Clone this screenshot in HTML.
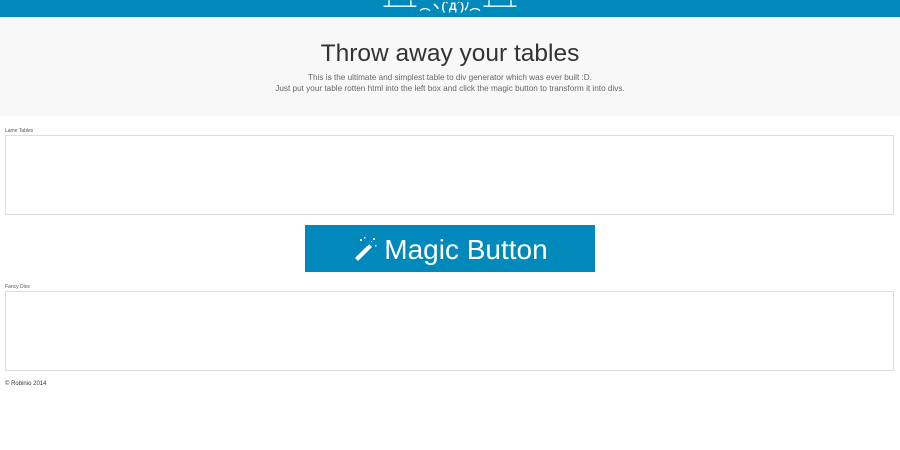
<!DOCTYPE html>
<html><head><meta charset="utf-8"><style>
body{margin:0;width:900px;height:450px;background:#fff;font-family:"Liberation Sans","Noto Sans CJK JP",sans-serif;overflow:hidden;position:relative}
.bar{position:absolute;left:0;top:0;width:900px;height:17px;background:#0089ba;overflow:hidden}
.bar span{position:absolute;left:0;width:900px;text-align:center;top:1px;color:#fff;font-size:11px;font-weight:bold;white-space:nowrap;line-height:12px}
.hero{position:absolute;left:0;top:17px;width:900px;height:99px;background:#f8f8f8;text-align:center;color:#666}
.hero h1{margin:0;position:absolute;top:23px;width:100%;font-weight:normal;font-size:24.5px;color:#333}
.hero p{margin:0;position:absolute;width:100%;font-size:8.2px;line-height:11px;top:55px}
.lbl{position:absolute;left:5px;font-size:5px;color:#555}
.ta{position:absolute;left:5px;width:887px;height:78px;border:1px solid #ddd;background:#fff}
.btn{position:absolute;left:305px;top:225px;width:290px;height:47px;background:#0089ba;color:#fff;font-size:28px;line-height:49px;text-align:center}
.btn svg{vertical-align:-3px;margin-right:6px}
.foot{position:absolute;left:5px;top:381px;font-size:6px;color:#333}
</style></head><body>
<div class="bar"><span>┻━┻ ︵ヽ(`Д´)ﾉ︵ ┻━┻</span></div>
<div class="hero"><h1>Throw away your tables</h1>
<p>This is the ultimate and simplest table to div generator which was ever built :D.<br>Just put your table rotten html into the left box and click the magic button to transform it into divs.</p></div>
<div class="lbl" style="top:128px">Lame Tables</div>
<div class="ta" style="top:135px"></div>
<div class="btn"><svg width="26" height="26" viewBox="0 0 26 26"><path d="M3 22 L17 8 L20 11 L6 25 Z" fill="#fff"/><path d="M15 10 L18 7" stroke="#0089ba" stroke-width="1"/><g fill="#fff"><rect x="8" y="3" width="2" height="2"/><rect x="12" y="1" width="1.5" height="1.5"/><rect x="21" y="2" width="2" height="2"/><rect x="23" y="9" width="1.5" height="1.5"/><rect x="19" y="5" width="1" height="1"/></g></svg>Magic Button</div>
<div class="lbl" style="top:284px">Fancy Divs</div>
<div class="ta" style="top:291px"></div>
<div class="foot">© Robinio 2014</div>
</body></html>
